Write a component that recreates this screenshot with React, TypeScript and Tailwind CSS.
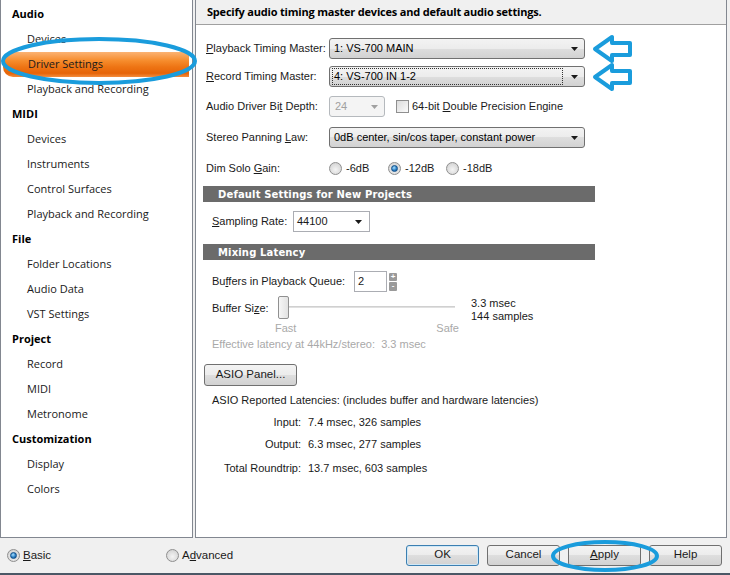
import React from "react";

const comboBg =
  "bg-[linear-gradient(to_bottom,#f3f3f3_0%,#ececec_50%,#dedede_50%,#d2d2d2_100%)]";

function Arrow({ grey }: { grey?: boolean }) {
  return (
    <svg width="7" height="4" viewBox="0 0 7 4" className="shrink-0">
      <path d="M0 0 H7 L3.5 4 Z" fill={grey ? "#a0a0a0" : "#1a1a1a"} />
    </svg>
  );
}

function Combo({ w, text, focus }: { w: string; text: string; focus?: boolean }) {
  return (
    <div
      className={`${w} h-[21px] rounded-[3px] border border-[#707070] ${comboBg} flex items-center pl-[3px] pr-[6px] text-[#000]`}
    >
      <div
        className={`flex-1 h-[15px] flex items-center pl-[1px] ${focus ? "outline outline-1 outline-dotted outline-[#333] mr-[9px]" : "mr-[9px]"}`}
      >
        {text}
      </div>
      <Arrow />
    </div>
  );
}

function Radio({ checked }: { checked?: boolean }) {
  return (
    <div className="w-[13px] h-[13px] rounded-full border border-[#8f8f8f] bg-[radial-gradient(circle_at_50%_60%,#f4f4f4_0%,#dcdcdc_60%,#c8c8c8_100%)] flex items-center justify-center shrink-0">
      {checked && (
        <div className="w-[7px] h-[7px] rounded-full bg-[radial-gradient(circle_at_40%_35%,#a8e0ff_0%,#2c7fc4_55%,#0c4a86_100%)] border border-[#104f8a]" />
      )}
    </div>
  );
}

function Btn({ children, def }: { children: React.ReactNode; def?: boolean }) {
  return (
    <div
      className={`w-[73px] h-[21px] rounded-[3px] border ${def ? "border-[#3c7fb1] shadow-[inset_0_0_0_1px_#cfe8f7]" : "border-[#707070]"} ${comboBg} flex items-center justify-center text-[11.5px]`}
    >
      {children}
    </div>
  );
}

const navFont = "font-['Segoe_UI','Open_Sans',sans-serif]";

const nav: { t: string; h?: boolean; sel?: boolean }[] = [
  { t: "Audio", h: true },
  { t: "Devices" },
  { t: "Driver Settings", sel: true },
  { t: "Playback and Recording" },
  { t: "MIDI", h: true },
  { t: "Devices" },
  { t: "Instruments" },
  { t: "Control Surfaces" },
  { t: "Playback and Recording" },
  { t: "File", h: true },
  { t: "Folder Locations" },
  { t: "Audio Data" },
  { t: "VST Settings" },
  { t: "Project", h: true },
  { t: "Record" },
  { t: "MIDI" },
  { t: "Metronome" },
  { t: "Customization", h: true },
  { t: "Display" },
  { t: "Colors" },
];

function SectionBar({ children }: { children: React.ReactNode }) {
  return (
    <div className="ml-[7px] w-[392px] h-[16px] bg-[#6b6b6b] flex items-center pl-[15px] text-white font-bold text-[10px] font-['DejaVu_Sans',sans-serif] tracking-[0.15px]">
      {children}
    </div>
  );
}

export default function App() {
  return (
    <div className="w-[730px] h-[575px] bg-[#f0f0f0] flex flex-col relative overflow-hidden font-['Liberation_Sans',Arial,sans-serif] text-[11px] text-[#1a1a1a]">
      <div className="flex h-[538px]">
        {/* left nav */}
        <div className={`w-[193px] bg-white border border-t-0 border-[#828790] flex flex-col pt-[2px] ${navFont} text-[11px]`}>
          {nav.map((n, i) => (
            <div key={i} className="h-[25px] flex items-center">
              {n.sel ? (
                <div className="ml-[2px] w-[186px] h-[25px] rounded-l-[10px] bg-[linear-gradient(to_bottom,#fbb374_0%,#f68c2c_35%,#ee7414_60%,#e66408_85%,#f38d3e_100%)] flex items-center pl-[25px] text-[#1a1a1a]">
                  {n.t}
                </div>
              ) : (
                <div className={n.h ? "pl-[11px] font-bold text-black" : "pl-[26px] text-[#1a1a1a]"}>{n.t}</div>
              )}
            </div>
          ))}
        </div>

        {/* right pane */}
        <div className="ml-[2px] w-[532px] bg-white border border-t-0 border-[#828790] flex flex-col">
          <div className={`h-[25px] bg-[#f0f0f0] border-b border-[#a0a0a0] flex items-center pl-[11px] font-bold text-[11px] tracking-[-0.2px] ${navFont} text-black`}>
            Specify audio timing master devices and default audio settings.
          </div>

          <div className="flex flex-col pl-[10px]">
            <div className="mt-[13px] flex items-center h-[21px]">
              <div className="w-[123px]"><u>P</u>layback Timing Master:</div>
              <Combo w="w-[256px]" text="1: VS-700 MAIN" />
            </div>
            <div className="mt-[7px] flex items-center h-[21px]">
              <div className="w-[123px]"><u>R</u>ecord Timing Master:</div>
              <Combo w="w-[256px]" text="4: VS-700 IN 1-2" focus />
            </div>
            <div className="mt-[9px] flex items-center h-[21px]">
              <div className="w-[123px]">Audio Driver Bi<u>t</u> Depth:</div>
              <div className="w-[56px] h-[21px] rounded-[3px] border border-[#b5b9bd] bg-[#f4f4f4] flex items-center pl-[5px] pr-[6px] text-[#a0a0a0]">
                <div className="flex-1">24</div>
                <Arrow grey />
              </div>
              <div className="ml-[11px] w-[13px] h-[13px] border border-[#8f8f8f] bg-[linear-gradient(135deg,#dcdcdc,#fbfbfb)]" />
              <div className="ml-[3px]">64-bit <u>D</u>ouble Precision Engine</div>
            </div>
            <div className="mt-[10px] flex items-center h-[21px]">
              <div className="w-[123px]">Stereo Panning <u>L</u>aw:</div>
              <Combo w="w-[256px]" text="0dB center, sin/cos taper, constant power" />
            </div>
            <div className="mt-[10px] flex items-center h-[20px]">
              <div className="w-[123px]">Dim Solo <u>G</u>ain:</div>
              <Radio />
              <div className="ml-[4px] w-[42px]">-6dB</div>
              <Radio checked />
              <div className="ml-[4px] w-[41px]">-12dB</div>
              <Radio />
              <div className="ml-[4px]">-18dB</div>
            </div>
            <div className="mt-[8px] -ml-[10px]">
              <SectionBar>Default Settings for New Projects</SectionBar>
            </div>
            <div className="mt-[9px] flex items-center h-[21px] pl-[6px]">
              <div className="w-[81px]"><u>S</u>ampling Rate:</div>
              <div className="w-[77px] h-[21px] border border-[#abadb3] bg-white flex items-center pl-[3px] pr-[7px]">
                <div className="flex-1">44100</div>
                <Arrow />
              </div>
            </div>
            <div className="mt-[12px] -ml-[10px]">
              <SectionBar>Mixing Latency</SectionBar>
            </div>
            <div className="mt-[11px] flex items-center h-[21px] pl-[6px]">
              <div className="w-[142px]">Bu<u>f</u>fers in Playback Queue:</div>
              <div className="w-[33px] h-[21px] border border-[#abadb3] bg-white flex items-center pl-[3px]">2</div>
              <div className="ml-[2px] w-[8px] h-[18px] flex flex-col gap-[1px]">
                <div className="flex-1 bg-[#9a9a9a] rounded-[1px] text-white text-[8px] leading-[8px] text-center font-bold">+</div>
                <div className="flex-1 bg-[#9a9a9a] rounded-[1px] text-white text-[8px] leading-[8px] text-center font-bold">-</div>
              </div>
            </div>
            <div className="mt-[4px] flex items-start h-[24px] pl-[6px]">
              <div className="w-[66px] mt-[6px] leading-[13px]">Buffer Si<u>z</u>e:</div>
              <div className="relative w-[180px] h-[23px] flex items-center">
                <div className="absolute left-[8px] right-[3px] top-[10px] h-[2px] bg-[#e0e0e0] border-t border-[#d0d0d0]" />
                <div className="relative w-[11px] h-[23px] rounded-[2px] border border-[#909090] bg-[linear-gradient(to_right,#f6f6f6,#e2e2e2)]" />
              </div>
              <div className="ml-[13px] leading-[13px] mt-[1px]">
                <div>3.3 msec</div>
                <div>144 samples</div>
              </div>
            </div>
            <div className="flex h-[12px] text-[#a9a9a9] items-center pl-[69px] w-[253px] justify-between mt-[2px]">
              <span>Fast</span>
              <span>Safe</span>
            </div>
            <div className="mt-[4px] pl-[6px] text-[#a9a9a9] h-[12px] flex items-center">
              Effective latency at 44kHz/stereo:&nbsp; 3.3 msec
            </div>
            <div className="mt-[14px] -ml-[2px]">
              <div className={`w-[93px] h-[22px] rounded-[3px] border border-[#707070] ${comboBg} flex items-center justify-center text-[11.5px]`}>
                ASIO Panel...
              </div>
            </div>
            <div className="mt-[8px] pl-[6px] h-[13px] flex items-center">
              ASIO Reported Latencies: (includes buffer and hardware latencies)
            </div>
            <div className="mt-[9px] flex h-[13px] items-center">
              <div className="w-[95px] text-right">Input:</div>
              <div className="ml-[7px]">7.4 msec, 326 samples</div>
            </div>
            <div className="mt-[9px] flex h-[13px] items-center">
              <div className="w-[95px] text-right">Output:</div>
              <div className="ml-[7px]">6.3 msec, 277 samples</div>
            </div>
            <div className="mt-[11px] flex h-[13px] items-center">
              <div className="w-[95px] text-right">Total Roundtrip:</div>
              <div className="ml-[7px]">13.7 msec, 603 samples</div>
            </div>
          </div>
        </div>
      </div>

      {/* bottom bar */}
      <div className="flex-1 flex items-center pl-[7px] text-[11.5px]">
        <Radio checked />
        <div className="ml-[3px] w-[143px]"><u>B</u>asic</div>
        <Radio />
        <div className="ml-[3px]">A<u>d</u>vanced</div>
        <div className="ml-auto mr-[8px] flex gap-[8px] -mt-[1px]">
          <Btn def>OK</Btn>
          <Btn>Cancel</Btn>
          <Btn><u>A</u>pply</Btn>
          <Btn>Help</Btn>
        </div>
      </div>
      <div className="h-[2px] bg-[#4b5866]" />

      {/* annotations */}
      <svg className="absolute inset-0 pointer-events-none" width="730" height="575" viewBox="0 0 730 575">
        <g fill="none" stroke="#1a9cdc" strokeWidth="4" strokeLinejoin="round">
          <ellipse cx="99" cy="61" rx="96" ry="22" />
          <path d="M595 49 L612 37 L612 43 L630 43 L630 55 L612 55 L612 61 Z" />
          <path d="M595 77 L612 65 L612 71 L630 71 L630 83 L612 83 L612 89 Z" />
          <ellipse cx="605" cy="556" rx="52" ry="14" />
        </g>
      </svg>
    </div>
  );
}
